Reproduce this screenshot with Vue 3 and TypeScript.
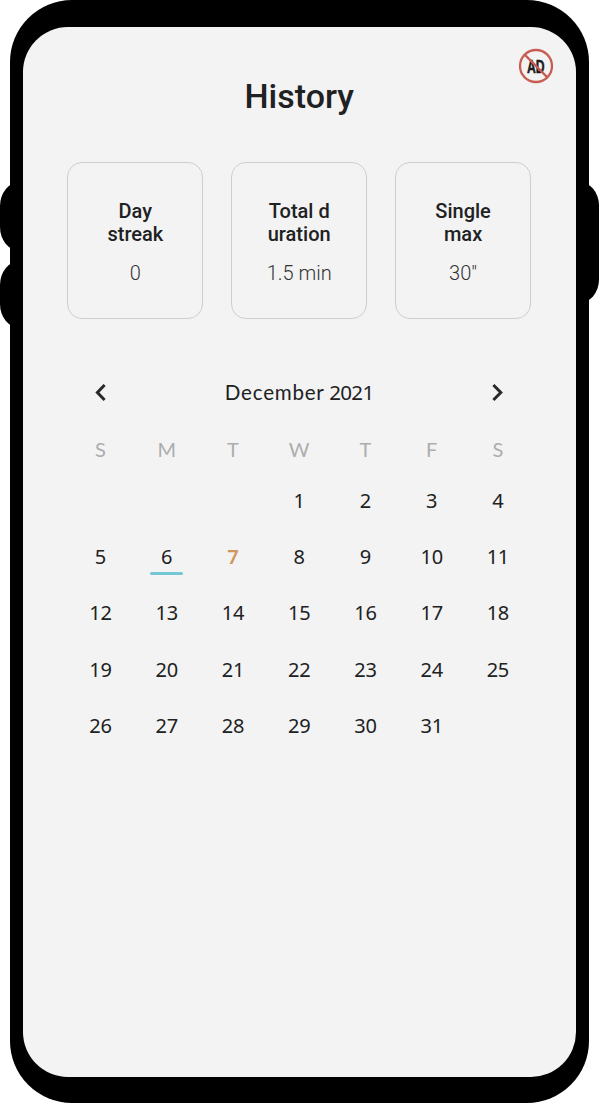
<script setup lang="ts">
interface Stat {
  lines: string[]
  value: string
}

const stats: Stat[] = [
  { lines: ['Day', 'streak'], value: '0' },
  { lines: ['Total d', 'uration'], value: '1.5 min' },
  { lines: ['Single', 'max'], value: '30"' },
]

const weekdays: string[] = ['S', 'M', 'T', 'W', 'T', 'F', 'S']
const leadingBlanks = 3
const daysInMonth = 31
const selectedDay = 6
const today = 7
</script>

<template>
  <div class="device">
    <i class="key volume-up"></i>
    <i class="key volume-down"></i>
    <i class="key power"></i>
    <div class="body">
      <main class="screen">
        <svg class="no-ads" width="36" height="36" viewBox="0 0 36 36" role="img" aria-label="Remove ads">
          <text class="ad-text" x="9" y="24.8" textLength="17.6" lengthAdjust="spacingAndGlyphs">AD</text>
          <circle cx="18" cy="18" r="16" />
          <path d="M6.6 6.6 29.4 29.4" />
        </svg>
        <h1>History</h1>
        <section class="stats">
          <article v-for="stat in stats" :key="stat.value" class="card">
            <h2><span v-for="line in stat.lines" :key="line">{{ line }}</span></h2>
            <p>{{ stat.value }}</p>
          </article>
        </section>
        <section class="calendar">
          <header class="month">
            <button type="button" aria-label="Previous month">
              <svg width="20" height="20" viewBox="0 0 20 20"><path d="M14.6 3 7.4 10.5l7.2 7.5" /></svg>
            </button>
            <span class="month-name">December <span class="year">2021</span></span>
            <button type="button" aria-label="Next month">
              <svg width="20" height="20" viewBox="0 0 20 20"><path d="M5.4 3 12.8 10.5 5.4 18" /></svg>
            </button>
          </header>
          <div class="grid weekdays">
            <span v-for="(day, i) in weekdays" :key="i">{{ day }}</span>
          </div>
          <div class="grid days">
            <span v-for="n in leadingBlanks" :key="'blank' + n"></span>
            <span
              v-for="day in daysInMonth"
              :key="day"
              :class="{ selected: day === selectedDay, today: day === today }"
            >{{ day }}</span>
          </div>
        </section>
      </main>
    </div>
  </div>
</template>

<style>
body {
  background: #fff;
}
</style>

<style scoped>
* {
  box-sizing: border-box;
}
.device {
  position: relative;
  width: 600px;
  height: 1104px;
  padding: 0 11px 1.5px 10.4px;
  overflow: hidden;
  font-family: Roboto, sans-serif;
  color: #202122;
}
.key {
  position: absolute;
  background: #000;
  width: 40px;
}
.volume-up {
  left: 0;
  top: 182px;
  height: 69px;
  border-radius: 20px / 24px;
}
.volume-down {
  left: 0;
  top: 261px;
  height: 67px;
  border-radius: 20px / 24px;
}
.power {
  right: 1px;
  top: 182px;
  height: 121px;
  border-radius: 24px / 28px;
}
.body {
  position: relative;
  height: 100%;
  padding: 27px 13px 25.5px 12.8px;
  background: #000;
  border-radius: 62px;
}
.screen {
  position: relative;
  height: 100%;
  background: #f3f3f3;
  border-radius: 45px;
  padding: 46px 45px 0 44.2px;
}
.no-ads {
  position: absolute;
  top: 21.4px;
  right: 21.6px;
}
.no-ads circle,
.no-ads path {
  fill: none;
  stroke: #c85d54;
  stroke-width: 2.3;
}
.ad-text {
  font: 700 18px 'Liberation Sans', sans-serif;
  fill: #1b1b1b;
  stroke: #1b1b1b;
  stroke-width: 0.5;
}
h1 {
  margin: 0;
  text-align: center;
  font-size: 34px;
  font-weight: 500;
  line-height: 46px;
}
.stats {
  display: grid;
  grid-template-columns: repeat(3, 1fr);
  gap: 28px;
  margin-top: 43px;
}
.card {
  height: 157px;
  border: 1px solid #cecece;
  border-radius: 15px;
  padding-top: 36.5px;
  text-align: center;
}
h2 {
  margin: 0;
  font-size: 20px;
  font-weight: 500;
  line-height: 23.5px;
}
h2 span {
  display: block;
}
.card p {
  margin: 14.5px 0 0;
  font-size: 20px;
  font-weight: 300;
  line-height: 25px;
  color: #333;
}
.calendar {
  margin-top: 57px;
  font-family: Lato, sans-serif;
  font-size: 20px;
}
.month {
  display: flex;
  justify-content: space-between;
  align-items: center;
  height: 32px;
  padding: 0 23px;
}
.month button {
  display: flex;
  padding: 0;
  border: 0;
  background: none;
}
.month path {
  fill: none;
  stroke: #292929;
  stroke-width: 3;
}
.month-name {
  font-size: 20.6px;
  letter-spacing: 0.75px;
  line-height: 30px;
}
.year {
  margin-left: -1px;
  font-family: 'Noto Sans', sans-serif;
  letter-spacing: -0.7px;
}
.grid {
  display: grid;
  grid-template-columns: repeat(7, 1fr);
  text-align: center;
}
.weekdays {
  margin-top: 24.5px;
  line-height: 32px;
  color: #adadad;
}
.days {
  margin-top: 8px;
  grid-auto-rows: 56.35px;
  font-family: 'Noto Sans', sans-serif;
  line-height: 56px;
  letter-spacing: -0.2px;
}
.days span {
  position: relative;
}
.selected::after {
  content: '';
  position: absolute;
  left: 50%;
  bottom: 10px;
  width: 33px;
  height: 3px;
  margin-left: -16.5px;
  border-radius: 1.5px;
  background: #72c6d6;
}
.today {
  color: #d0965d;
  font-weight: 600;
}
</style>
